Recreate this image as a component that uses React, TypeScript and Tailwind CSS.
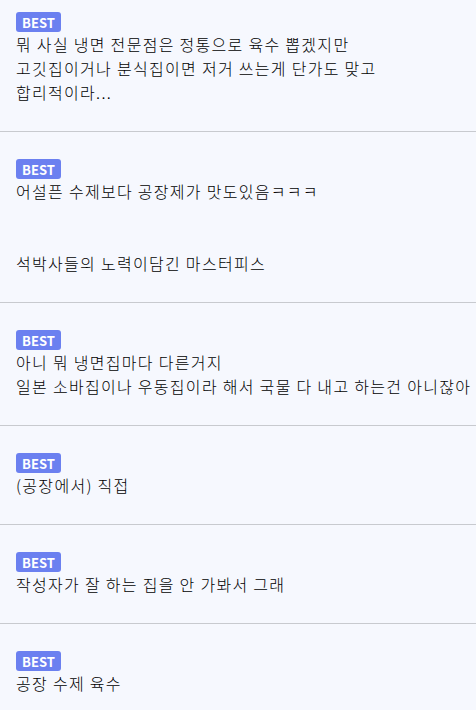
const comments: string[][] = [
  ["뭐 사실 냉면 전문점은 정통으로 육수 뽑겠지만", "고깃집이거나 분식집이면 저거 쓰는게 단가도 맞고", "합리적이라..."],
  ["어설픈 수제보다 공장제가 맛도있음ㅋㅋㅋ", "", "", "석박사들의 노력이담긴 마스터피스"],
  ["아니 뭐 냉면집마다 다른거지", "일본 소바집이나 우동집이라 해서 국물 다 내고 하는건 아니잖아"],
  ["(공장에서) 직접"],
  ["작성자가 잘 하는 집을 안 가봐서 그래"],
  ["공장 수제 육수"],
];

const BestBadge = () => (
  <span className="inline-flex h-[20px] w-[45px] items-center justify-center rounded-[3px] bg-[#6b80f0] text-[13px] font-bold leading-none tracking-normal text-white">
    BEST
  </span>
);

export default function App() {
  return (
    <div
      className="min-h-[710px] w-[476px] overflow-hidden bg-[#f6f8fe] text-black"
      style={{ fontFamily: '"Noto Sans CJK KR", "Noto Sans", sans-serif' }}
    >
      {comments.map((lines, i) => (
        <div
          key={i}
          className={`border-b border-[#c8cacf] px-4 pb-[27px] ${i === 0 ? "pt-[12px]" : "pt-[27px]"}`}
        >
          <div className="flex h-[20px]">
            <BestBadge />
          </div>
          <div className="whitespace-nowrap text-[16px] font-light leading-[24px] tracking-[1.3px]">
            {lines.map((line, j) => (
              <div key={j} className="h-[24px]">
                {line}
              </div>
            ))}
          </div>
        </div>
      ))}
    </div>
  );
}
